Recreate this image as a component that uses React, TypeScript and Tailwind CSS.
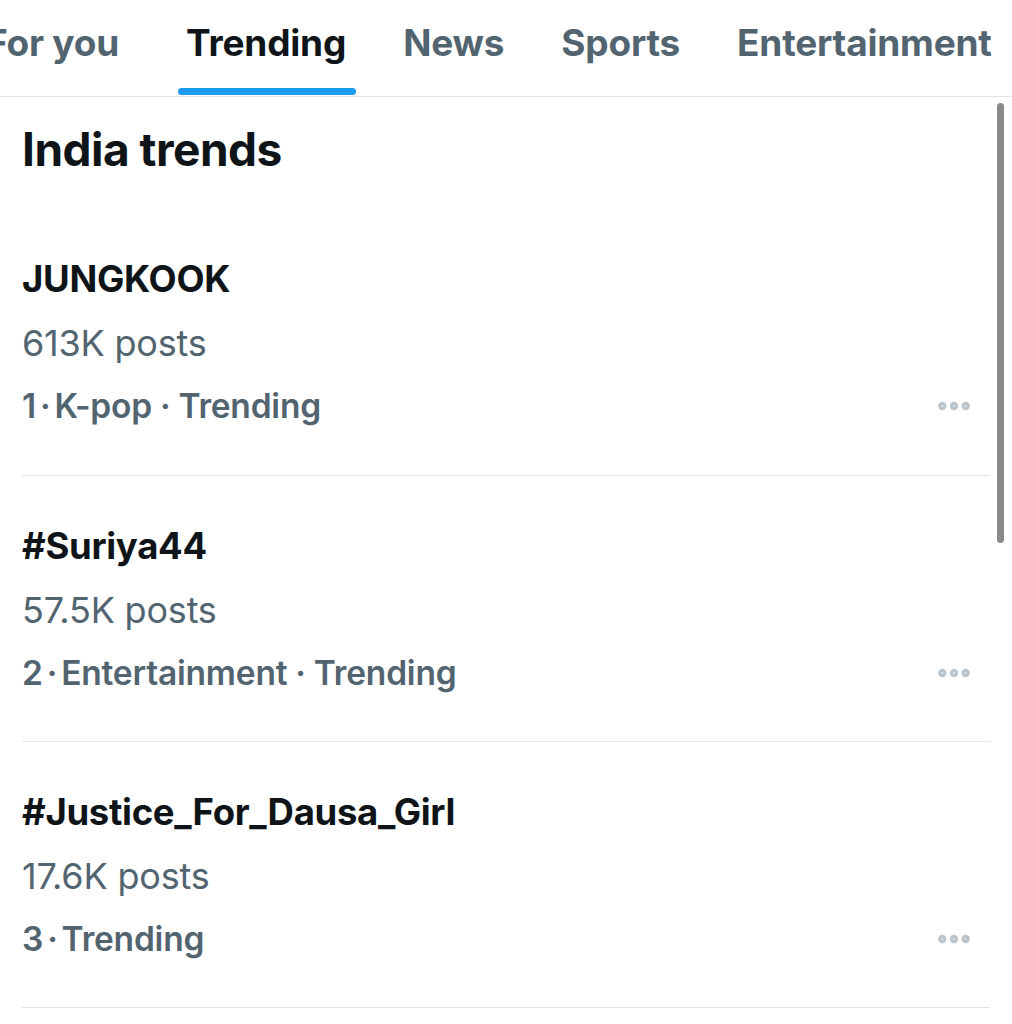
import { MoreHorizontal } from 'lucide-react'

const tabs = ['For you', 'Trending', 'News', 'Sports', 'Entertainment']

const trends = [
  { title: 'JUNGKOOK', posts: '613K posts', meta: ['1', 'K-pop', 'Trending'] },
  { title: '#Suriya44', posts: '57.5K posts', meta: ['2', 'Entertainment', 'Trending'] },
  { title: '#Justice_For_Dausa_Girl', posts: '17.6K posts', meta: ['3', 'Trending'] },
]

export default function App() {
  return (
    <div
      className="w-[1012px] h-[1024px] overflow-hidden bg-white relative"
      style={{ fontFamily: 'Inter, "Noto Sans", sans-serif' }}
    >
      {/* Tabs */}
      <div className="h-[97px] border-b border-[#e1e4e7] flex items-start overflow-hidden">
        <div className="flex gap-[37px] ml-[-24px]">
          {tabs.map(t => (
            <div key={t} className="relative px-[10px] h-[96px] flex flex-col first:mr-[10px]">
              <span
                className={
                  'mt-[19px] text-[37px] leading-[48px] font-bold tracking-[-0.2px] whitespace-nowrap ' +
                  (t === 'Trending' ? 'text-[#0f1419]' : 'text-[#536471]')
                }
              >
                {t}
              </span>
              {t === 'Trending' && (
                <div className="absolute left-[2px] right-0 bottom-[1px] h-[7px] rounded-full bg-[#1d9bf0]" />
              )}
            </div>
          ))}
        </div>
      </div>

      {/* Scrollbar */}
      <div className="absolute right-[8px] top-[103px] w-[7px] h-[440px] rounded-full bg-[#8a8a8a]" />

      <div className="pl-[22px] pr-[22px]">
        <h1 className="mt-[24px] text-[46px] leading-[56px] font-bold text-[#0f1419] tracking-[-0.5px]">
          India trends
        </h1>

        <div className="mt-[40px]">
          {trends.map((tr, i) => (
            <div
              key={i}
              className="border-b border-[#e1e4e7] h-[266px] flex flex-col pt-[48px] first:pt-[40px] first:h-[259px]"
            >
              <div className="text-[36.5px] leading-[44px] font-bold text-[#0f1419] tracking-[-0.3px]">{tr.title}</div>
              <div className="mt-[20px] text-[36px] leading-[44px] text-[#536471] tracking-[-0.2px]">{tr.posts}</div>
              <div className="mt-[19px] flex items-center justify-between">
                <div className="text-[33.5px] leading-[44px] font-semibold text-[#536471] tracking-[-0.2px]">
                  {tr.meta.map((m, j) => (
                    <span key={j}>
                      {j === 1 && <span className="mx-[4px]">·</span>}
                      {j > 1 && <span className="mx-[8px]">·</span>}
                      {m}
                    </span>
                  ))}
                </div>
                <MoreHorizontal className="w-[40px] h-[40px] mr-[16px] text-[#b9c4cd]" strokeWidth={3} />
              </div>
            </div>
          ))}
        </div>
      </div>
    </div>
  )
}
